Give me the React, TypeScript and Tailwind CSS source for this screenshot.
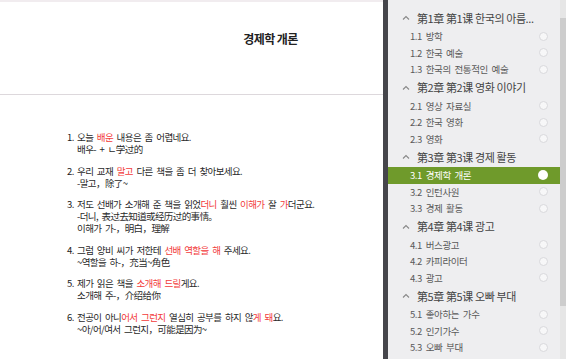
import React from "react";

type Part = string | { red: string };

interface Sentence {
  no: number;
  line: Part[];
  notes: string[];
}

const sentences: Sentence[] = [
  { no: 1, line: ["오늘 ", { red: "배운" }, " 내용은 좀 어렵네요."], notes: ["배우- + ㄴ学过的"] },
  { no: 2, line: ["우리 교재 ", { red: "말고" }, " 다른 책을 좀 더 찾아보세요."], notes: ["-말고，除了~"] },
  {
    no: 3,
    line: ["저도 선배가 소개해 준 책을 읽었", { red: "더니" }, " 훨씬 ", { red: "이해가" }, " 잘 ", { red: "가" }, "더군요."],
    notes: ["-더니, 表过去知道或经历过的事情。", "이해가 가-，明白，理解"],
  },
  { no: 4, line: ["그럼 양비 씨가 저한테 ", { red: "선배 역할을 해" }, " 주세요."], notes: ["~역할을 하-，充当~角色"] },
  { no: 5, line: ["제가 읽은 책을 ", { red: "소개해 드릴" }, "게요."], notes: ["소개해 주-，介绍给你"] },
  {
    no: 6,
    line: ["전공이 아니", { red: "어서 그런지" }, " 열심히 공부를 하지 않", { red: "게 돼" }, "요."],
    notes: ["~아/어/여서 그런지，可能是因为~"],
  },
];

const chapters = [
  { title: "第1章 第1课 한국의 아름...", items: ["1.1 방학", "1.2 한국 예술", "1.3 한국의 전통적인 예술"] },
  { title: "第2章 第2课 영화 이야기", items: ["2.1 영상 자료실", "2.2 한국 영화", "2.3 영화"] },
  { title: "第3章 第3课 경제 활동", items: ["3.1 경제학 개론", "3.2 인턴사원", "3.3 경제 활동"] },
  { title: "第4章 第4课 광고", items: ["4.1 버스광고", "4.2 카피라이터", "4.3 광고"] },
  { title: "第5章 第5课 오빠 부대", items: ["5.1 좋아하는 가수", "5.2 인기가수", "5.3 오빠 부대"] },
];

const active = "3.1 경제학 개론";

function Caret() {
  return (
    <svg width="8" height="6" viewBox="0 0 8 6" className="shrink-0">
      <path d="M1 4.5 L4 1.5 L7 4.5" fill="none" stroke="#888" strokeWidth="1.1" />
    </svg>
  );
}

export default function App() {
  return (
    <div
      className="flex w-[566px] h-[359px] overflow-hidden bg-white text-[#2a2a2a]"
      style={{ fontFamily: '"Noto Sans CJK KR", "Noto Sans CJK SC", sans-serif' }}
    >
      {/* main reading area */}
      <div className="w-[383px] shrink-0 flex flex-col">
        <div className="h-[2px] bg-[#f1ecef]" />
        <div className="h-[93px] border-b border-[#ddd8dc] flex justify-center pl-[158px] pt-[28px]">
          <h1 className="text-[12px] font-bold text-[#222] tracking-[-0.6px]">경제학 개론</h1>
        </div>
        <ol className="pl-[67px] pt-[36px] flex flex-col gap-[9.5px] text-[9.5px] leading-[12px] tracking-[-0.6px] [word-spacing:2px]">
          {sentences.map((s) => (
            <li key={s.no} className="flex">
              <span className="w-[10px] shrink-0 text-[#222]">{s.no}.</span>
              <div>
                <div>
                  {s.line.map((p, i) =>
                    typeof p === "string" ? (
                      <span key={i}>{p}</span>
                    ) : (
                      <span key={i} className="text-[#f23b3b]">
                        {p.red}
                      </span>
                    )
                  )}
                </div>
                {s.notes.map((n) => (
                  <div key={n}>{n}</div>
                ))}
              </div>
            </li>
          ))}
        </ol>
      </div>

      {/* divider */}
      <div className="w-[5px] shrink-0 bg-[#45454b]" />

      {/* chapter sidebar */}
      <div className="flex-1 flex bg-[#eeeef0]">
        <div className="flex-1 pt-[8px] text-[#5a5a5a]">
          {chapters.map((c) => (
            <div key={c.title}>
              <div className="h-[20px] flex items-center gap-[7px] pl-[14px] text-[11px] text-[#444] tracking-[-0.4px]">
                <Caret />
                <span>{c.title}</span>
              </div>
              {c.items.map((it) => {
                const on = it === active;
                return (
                  <div
                    key={it}
                    className={
                      "h-[16.5px] flex items-center justify-between pl-[22px] pr-[12px] text-[9.5px] tracking-[-0.4px] [word-spacing:2px] " +
                      (on ? "bg-[#6f9a2b] text-white" : "")
                    }
                  >
                    <span>{it}</span>
                    {on ? (
                      <span className="w-[10px] h-[10px] rounded-full bg-white" />
                    ) : (
                      <span className="w-[9px] h-[9px] rounded-full bg-[#f7f7f8] border border-[#d9d9dc]" />
                    )}
                  </div>
                );
              })}
            </div>
          ))}
        </div>
        <div className="w-[6px] shrink-0 flex flex-col bg-[#e6e6e6]">
          <div className="h-[18px]" />
          <div className="h-[288px] bg-[#cdcdcd]" />
        </div>
      </div>
    </div>
  );
}
